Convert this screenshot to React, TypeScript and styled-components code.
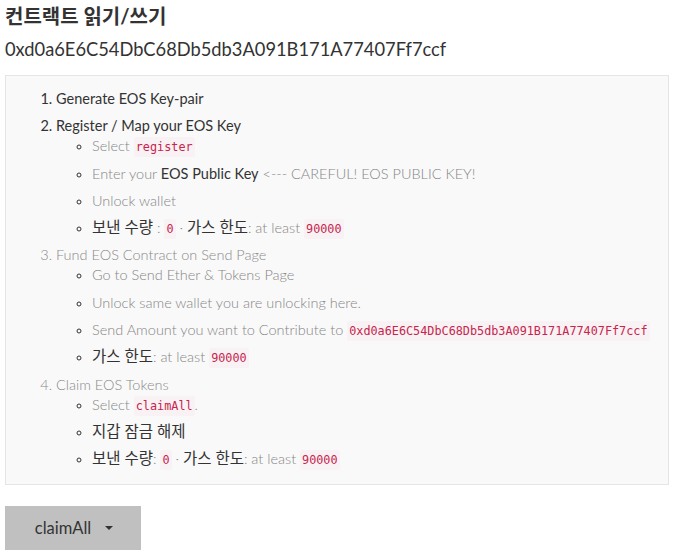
import styled, { createGlobalStyle } from 'styled-components'

const GlobalStyle = createGlobalStyle`
  body {
    margin: 0;
    background: #ffffff;
    font-family: Lato, "Noto Sans CJK KR", sans-serif;
    color: #333333;
  }
`

const Page = styled.div`
  padding: 3px 10px 0 5px;
`

const Title = styled.h2`
  margin: 0;
  font-size: 20px;
  font-weight: 700;
  line-height: 26px;
  color: #333;
`

const Address = styled.p`
  margin: 8px 0 0;
  font-size: 18.3px;
  line-height: 24px;
  color: #333;
`

const Panel = styled.div`
  margin-top: 14px;
  background: #f9f9f9;
  border: 1px solid #e5e5e5;
  padding: 13px 0 15px;
`

const Steps = styled.ol`
  margin: 0;
  padding-left: 50px;
  font-size: 14.5px;
  line-height: 20px;
`

const Step = styled.li<{ $muted?: boolean }>`
  color: ${(p) => (p.$muted ? '#8a8a8a' : '#333')};
  font-weight: ${(p) => (p.$muted ? 300 : 400)};
  & + & {
    margin-top: 7.3px;
  }
`

const SubList = styled.ul`
  margin: 0;
  padding-left: 36px;
  list-style: circle;
  color: #333;
`

const Sub = styled.li`
  color: #868686;
  font-weight: 300;
  & + & {
    margin-top: 7.3px;
  }
  &::marker {
    color: #333;
    font-size: 12px;
  }
`

const Dark = styled.span<{ $ko?: boolean }>`
  color: #333;
  font-weight: 400;
  font-size: ${(p) => (p.$ko ? '15.5px' : 'inherit')};
  line-height: ${(p) => (p.$ko ? 1 : 'inherit')};
`

const Code = styled.code`
  font-family: "DejaVu Sans Mono", monospace;
  font-size: 11.8px;
  line-height: 1;
  font-weight: 400;
  color: #c7254e;
  background: #f9f2f4;
  padding: 3px 2px;
  border-radius: 2px;
`

const ButtonRow = styled.div`
  margin-top: 21px;
`

const DropButton = styled.button`
  display: inline-flex;
  align-items: center;
  gap: 14px;
  width: 136px;
  height: 44px;
  justify-content: center;
  border: none;
  background: #c0c0c0;
  font-family: Lato, sans-serif;
  font-size: 16.5px;
  color: #333;
  padding: 0 0 0 2px;
`

const Caret = styled.span`
  width: 0;
  height: 0;
  border-left: 4px solid transparent;
  border-right: 4px solid transparent;
  border-top: 4px solid #333;
`

export default function App() {
  return (
    <Page>
      <GlobalStyle />
      <Title>컨트랙트 읽기/쓰기</Title>
      <Address>0xd0a6E6C54DbC68Db5db3A091B171A77407Ff7ccf</Address>
      <Panel>
        <Steps>
          <Step>Generate EOS Key-pair</Step>
          <Step>
            Register / Map your EOS Key
            <SubList>
              <Sub>
                Select <Code>register</Code>
              </Sub>
              <Sub>
                Enter your <Dark>EOS Public Key</Dark> &lt;--- CAREFUL! EOS PUBLIC KEY!
              </Sub>
              <Sub>Unlock wallet</Sub>
              <Sub>
                <Dark $ko>보낸 수량 </Dark>: <Code>0</Code> · <Dark $ko>가스 한도</Dark>: at least <Code>90000</Code>
              </Sub>
            </SubList>
          </Step>
          <Step $muted>
            Fund EOS Contract on Send Page
            <SubList>
              <Sub>Go to Send Ether &amp; Tokens Page</Sub>
              <Sub>Unlock same wallet you are unlocking here.</Sub>
              <Sub>
                Send Amount you want to Contribute to <Code>0xd0a6E6C54DbC68Db5db3A091B171A77407Ff7ccf</Code>
              </Sub>
              <Sub>
                <Dark $ko>가스 한도</Dark>: at least <Code>90000</Code>
              </Sub>
            </SubList>
          </Step>
          <Step $muted>
            Claim EOS Tokens
            <SubList>
              <Sub>
                Select <Code>claimAll</Code>.
              </Sub>
              <Sub>
                <Dark $ko>지갑 잠금 해제</Dark>
              </Sub>
              <Sub>
                <Dark $ko>보낸 수량</Dark>: <Code>0</Code> · <Dark $ko>가스 한도</Dark>: at least <Code>90000</Code>
              </Sub>
            </SubList>
          </Step>
        </Steps>
      </Panel>
      <ButtonRow>
        <DropButton>
          claimAll <Caret />
        </DropButton>
      </ButtonRow>
    </Page>
  )
}
